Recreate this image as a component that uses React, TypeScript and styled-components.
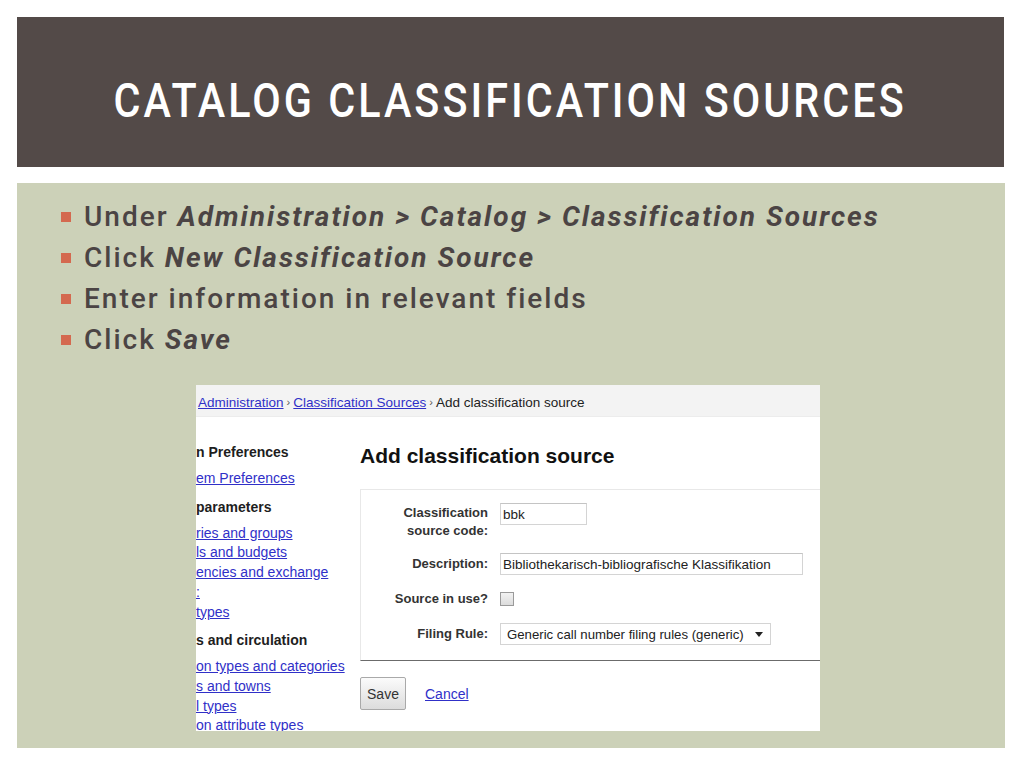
import React from "react";
import styled, { createGlobalStyle } from "styled-components";

const GlobalStyle = createGlobalStyle`
  html, body {
    margin: 0;
    padding: 0;
    background: #ffffff;
  }
  body {
    width: 1024px;
    height: 768px;
    overflow: hidden;
  }
  * { box-sizing: border-box; }
`;

const Slide = styled.div`
  width: 1024px;
  height: 768px;
  padding: 17px 19px 20px 17px;
  display: flex;
  flex-direction: column;
  gap: 16px;
  background: #ffffff;
`;

const TitleBar = styled.header`
  height: 150px;
  margin-right: 1px;
  padding-top: 17px;
  background: #534a48;
  display: flex;
  align-items: center;
  justify-content: center;
`;

const Title = styled.h1`
  margin: 0;
  color: #ffffff;
  font-family: Roboto, "Liberation Sans", sans-serif;
  font-weight: 500;
  font-size: 48px;
  letter-spacing: 3.55px;
  text-transform: uppercase;
  line-height: 1;
  white-space: nowrap;
  transform: scaleX(0.86);
`;

const Content = styled.section`
  flex: 1;
  background: #ccd1b8;
  display: flex;
  flex-direction: column;
`;

const Bullets = styled.ul`
  list-style: none;
  margin: 0;
  padding: 13px 0 0 44px;
`;

const Bullet = styled.li`
  display: flex;
  align-items: center;
  gap: 13px;
  height: 41px;
  font-family: Roboto, "Liberation Sans", sans-serif;
  font-size: 28px;
  font-weight: 500;
  letter-spacing: 2px;
  color: #4b4444;
  white-space: pre;
`;

const Square = styled.span`
  width: 10px;
  height: 10px;
  flex: none;
  background: #d4694f;
`;

const Em = styled.em`
  font-style: italic;
  font-weight: 700;
`;

const Shot = styled.div`
  margin: 25px 0 0 179px;
  width: 624px;
  height: 346px;
  background: #ffffff;
  overflow: hidden;
  display: flex;
  flex-direction: column;
  font-family: "Liberation Sans", Arial, sans-serif;
  color: #222;
`;

const Breadcrumb = styled.div`
  height: 32px;
  flex: none;
  background: #f3f3f3;
  border-bottom: 1px solid #ececec;
  padding: 3px 0 0 2px;
  display: flex;
  align-items: center;
  font-size: 13.5px;
  color: #222;
  white-space: pre;
`;

const Link = styled.a`
  color: #3030c8;
  text-decoration: underline;
  cursor: pointer;
`;

const Sep = styled.span`
  font-size: 11px;
  color: #555;
`;

const ShotBody = styled.div`
  flex: 1;
  display: flex;
  min-height: 0;
`;

const Sidebar = styled.nav`
  width: 164px;
  flex: none;
  padding-top: 17px;
  font-size: 14px;
  overflow: hidden;
  white-space: nowrap;
`;

const SideHeading = styled.div`
  margin: 8px 0 7px;
  line-height: 20px;
  font-weight: 700;
  color: #1e1e1e;
`;

const SideLink = styled(Link)`
  display: block;
  line-height: 19.7px;
`;

const Main = styled.div`
  flex: 1;
  padding-top: 27px;
  display: flex;
  flex-direction: column;
`;

const Heading = styled.h2`
  margin: 0;
  font-size: 21px;
  line-height: 24px;
  font-weight: 700;
  color: #111;
`;

const Fieldset = styled.div`
  margin: 21px -30px 0 0;
  border-top: 1px solid #e8e8e8;
  border-left: 1px solid #e8e8e8;
  border-bottom: 1px solid #6b6b6b;
  padding: 13px 0 15px;
  display: flex;
  flex-direction: column;
  gap: 13px;
`;

const Row = styled.div<{ $top?: boolean }>`
  display: grid;
  grid-template-columns: 127px 1fr;
  column-gap: 12px;
  align-items: ${(p) => (p.$top ? "start" : "center")};
  min-height: 22px;
`;

const Label = styled.label<{ $top?: boolean }>`
  text-align: right;
  font-size: 13px;
  font-weight: 700;
  line-height: 18px;
  color: #333;
  margin-top: ${(p) => (p.$top ? "1px" : "0")};
`;

const Input = styled.div<{ $w: number }>`
  width: ${(p) => p.$w}px;
  height: 22px;
  border: 1px solid #d4d4d4;
  border-top-color: #c4c4c4;
  background: #fff;
  padding-left: 2px;
  display: flex;
  align-items: center;
  font-size: 13.5px;
  color: #222;
  white-space: nowrap;
`;

const Checkbox = styled.span`
  width: 14px;
  height: 14px;
  border: 1px solid #9a9a9a;
  background: linear-gradient(#f2f2f2, #dcdcdc);
  display: block;
`;

const Select = styled.div`
  width: 271px;
  height: 22px;
  border: 1px solid #d4d4d4;
  background: #fff;
  padding: 0 7px 0 6px;
  display: flex;
  align-items: center;
  justify-content: space-between;
  gap: 8px;
  font-size: 13.2px;
  color: #222;
  white-space: nowrap;
`;

const Actions = styled.div`
  margin-top: 16px;
  display: flex;
  align-items: center;
  gap: 19px;
`;

const Button = styled.button`
  width: 46px;
  height: 33px;
  padding: 0;
  border: 1px solid #a9a9a9;
  border-radius: 2px;
  background: linear-gradient(#fbfbfb, #dcdcdc);
  font-family: "Liberation Sans", Arial, sans-serif;
  font-size: 14px;
  color: #333;
`;

const CancelLink = styled(Link)`
  font-size: 14px;
`;

const sidebar: { text: string; heading?: boolean }[] = [
  { text: "n Preferences", heading: true },
  { text: "em Preferences" },
  { text: "parameters", heading: true },
  { text: "ries and groups" },
  { text: "ls and budgets" },
  { text: "encies and exchange" },
  { text: ":" },
  { text: "types" },
  { text: "s and circulation", heading: true },
  { text: "on types and categories" },
  { text: "s and towns" },
  { text: "l types" },
  { text: "on attribute types" },
];

export default function App() {
  return (
    <>
      <GlobalStyle />
      <Slide>
        <TitleBar>
          <Title>Catalog Classification Sources</Title>
        </TitleBar>
        <Content>
          <Bullets>
            <Bullet>
              <Square />
              <span>
                Under <Em>Administration &gt; Catalog &gt; Classification Sources</Em>
              </span>
            </Bullet>
            <Bullet>
              <Square />
              <span>
                Click <Em>New Classification Source</Em>
              </span>
            </Bullet>
            <Bullet>
              <Square />
              <span>Enter information in relevant fields</span>
            </Bullet>
            <Bullet>
              <Square />
              <span>
                Click <Em>Save</Em>
              </span>
            </Bullet>
          </Bullets>
          <Shot>
            <Breadcrumb>
              <Link>Administration</Link>
              <Sep> › </Sep>
              <Link>Classification Sources</Link>
              <Sep> › </Sep>
              <span>Add classification source</span>
            </Breadcrumb>
            <ShotBody>
              <Sidebar>
                {sidebar.map((s, i) =>
                  s.heading ? (
                    <SideHeading key={i}>{s.text}</SideHeading>
                  ) : (
                    <SideLink key={i}>{s.text}</SideLink>
                  )
                )}
              </Sidebar>
              <Main>
                <Heading>Add classification source</Heading>
                <Fieldset>
                  <Row $top>
                    <Label $top>
                      Classification
                      <br />
                      source code:
                    </Label>
                    <Input $w={87}>bbk</Input>
                  </Row>
                  <Row>
                    <Label>Description:</Label>
                    <Input $w={303}>Bibliothekarisch-bibliografische Klassifikation</Input>
                  </Row>
                  <Row>
                    <Label>Source in use?</Label>
                    <Checkbox />
                  </Row>
                  <Row>
                    <Label>Filing Rule:</Label>
                    <Select>
                      <span>Generic call number filing rules (generic)</span>
                      <svg width="8" height="5" viewBox="0 0 8 5">
                        <path d="M0 0 L8 0 L4 5 Z" fill="#222" />
                      </svg>
                    </Select>
                  </Row>
                </Fieldset>
                <Actions>
                  <Button>Save</Button>
                  <CancelLink>Cancel</CancelLink>
                </Actions>
              </Main>
            </ShotBody>
          </Shot>
        </Content>
      </Slide>
    </>
  );
}
